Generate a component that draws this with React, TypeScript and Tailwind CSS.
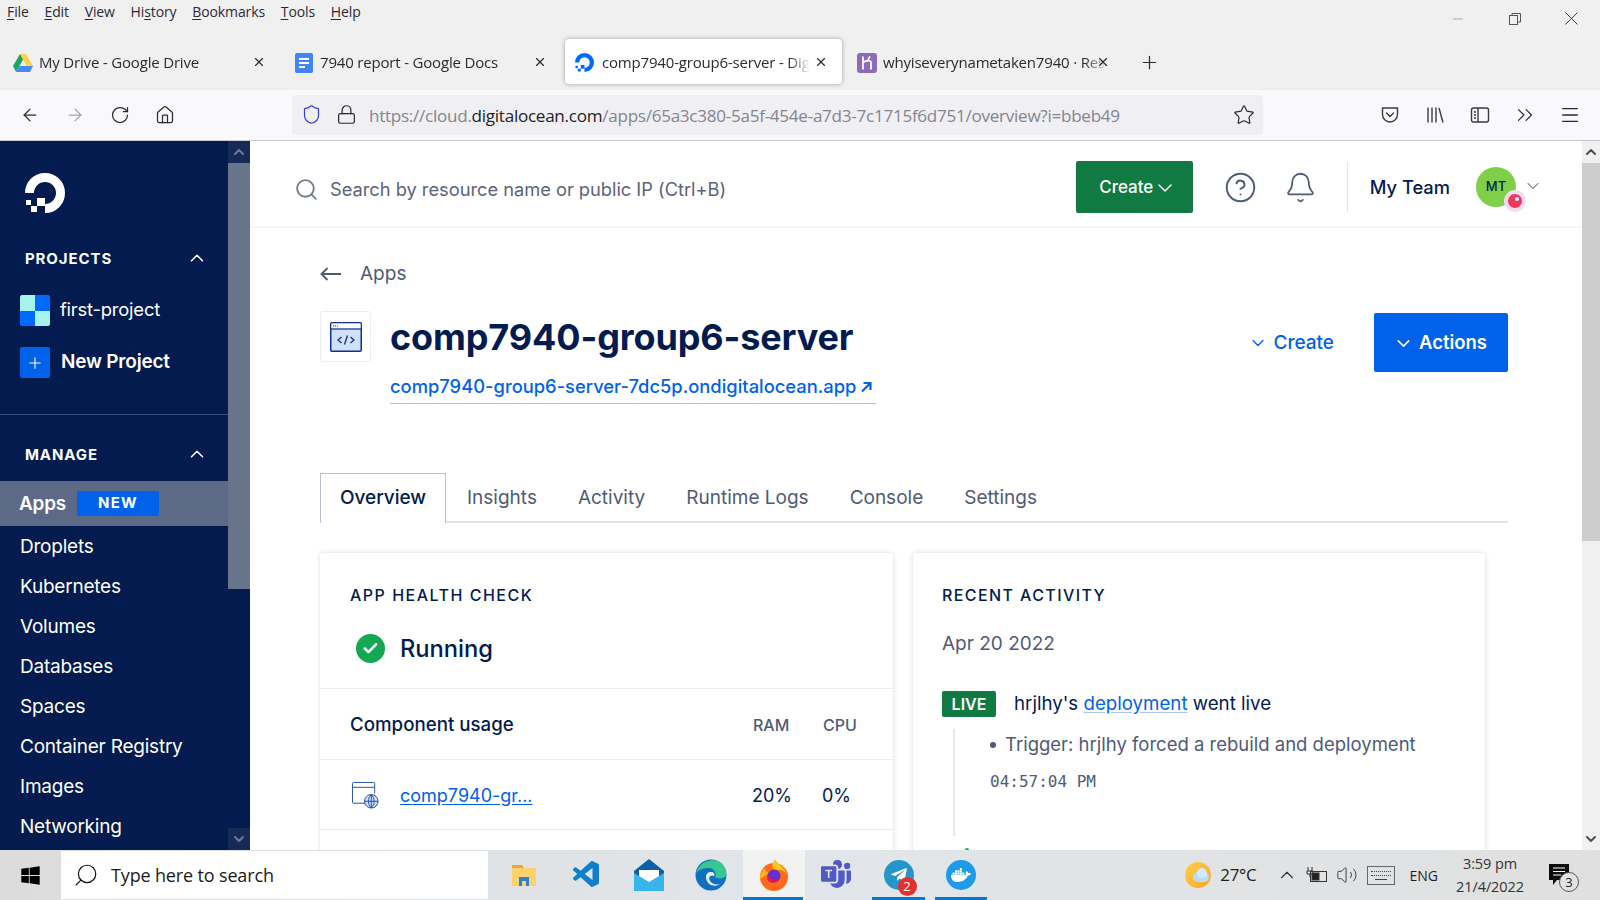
import type { ReactNode } from "react";
import {
  ArrowLeft,
  ArrowRight,
  Bell,
  Check,
  ChevronDown,
  ChevronUp,
  ChevronsRight,
  CircleHelp,
  Home,
  Lock,
  Menu,
  Minus,
  Plus,
  RotateCw,
  Search,
  Shield,
  Star,
  Volume2,
  X,
} from "lucide-react";
import { BsMicrosoftTeams } from "react-icons/bs";
import { FaDocker, FaTelegramPlane, FaWindows } from "react-icons/fa";
import { VscVscode } from "react-icons/vsc";

const browserFont = "font-['Open_Sans',sans-serif]";
const appFont = "font-['Inter',sans-serif]";

function DoLogo({ className, color }: { className: string; color: string }) {
  return (
    <svg viewBox="0 0 40 40" className={className}>
      <path d="M4.5 20A15.5 15.5 0 1 1 20 35.5" fill="none" stroke={color} strokeWidth="9" />
      <rect x="12" y="25" width="8" height="8" fill={color} />
      <rect x="6" y="33" width="6" height="6" fill={color} />
      <rect x="1" y="27" width="5" height="5" fill={color} />
    </svg>
  );
}

function DriveIcon() {
  return (
    <svg viewBox="0 0 20 18" className="h-[18px] w-5 shrink-0">
      <path d="M7 0h6l-3.2 6L6.5 12 3 18 0 12z" fill="#1fa463" />
      <path d="M7 0h6l7 12h-6.5z" fill="#ffd04b" />
      <path d="M6.5 12H20l-3 6H3z" fill="#4688f4" />
    </svg>
  );
}

function DocsIcon() {
  return (
    <svg viewBox="0 0 18 20" className="h-5 w-[18px] shrink-0">
      <rect width="18" height="20" rx="2" fill="#4285f4" />
      <path d="M4 6h10M4 10h10M4 14h6" stroke="#fff" strokeWidth="1.8" />
    </svg>
  );
}

function HerokuIcon() {
  return (
    <svg viewBox="0 0 20 20" className="h-5 w-5 shrink-0">
      <rect width="20" height="20" rx="3" fill="#8d6bb8" />
      <path d="M6 3.5v13M6 9.5c3-2 8-3 8 0v7M13 3.5l-2 3" fill="none" stroke="#fff" strokeWidth="1.8" />
    </svg>
  );
}

function BrowserTab({
  icon,
  title,
  active,
  className,
}: {
  icon: ReactNode;
  title: string;
  active?: boolean;
  className: string;
}) {
  return (
    <div
      className={`flex h-[45px] items-center rounded-[4px] ${className} ${
        active ? "bg-white pt-[2px] shadow-[0_0_4px_rgba(0,0,0,0.35)]" : "pt-[4px]"
      }`}
    >
      {icon}
      <div className="min-w-0 flex-1 overflow-hidden text-[15px] tracking-[-0.18px] whitespace-nowrap text-[#2b2a33] [mask-image:linear-gradient(to_right,black_90%,transparent_100%)]">
        {title}
      </div>
    </div>
  );
}

function MenuBar() {
  const items = [
    ["", "F", "ile"],
    ["", "E", "dit"],
    ["", "V", "iew"],
    ["Hi", "s", "tory"],
    ["", "B", "ookmarks"],
    ["", "T", "ools"],
    ["", "H", "elp"],
  ];
  return (
    <div className="flex h-[38px] shrink-0 items-start justify-between pr-[17px] pl-[7px]">
      <div className="flex gap-[15.7px] pt-[1px] text-[14px] tracking-[-0.1px] text-[#2b2a33]">
        {items.map(([before, key, after]) => (
          <span key={key}>
            {before}
            <span className="underline underline-offset-2">{key}</span>
            {after}
          </span>
        ))}
      </div>
      <div className="flex items-center pt-[7px] text-[#888]">
        <Minus className="h-4 w-4" strokeWidth={1} />
        <svg viewBox="0 0 12 12" className="ml-[43px] h-3 w-3" fill="none" stroke="#555" strokeWidth="1">
          <rect x="0.5" y="2.5" width="8" height="9" />
          <path d="M3 2.5V.5h8.5V9H8.5" />
        </svg>
        <X className="ml-[39px] h-[23px] w-[23px] text-[#222]" strokeWidth={0.9} />
      </div>
    </div>
  );
}

function TabStrip() {
  return (
    <div className="flex h-[52px] shrink-0 items-start">
      <div className="relative flex w-[281px] items-center pl-[13px]">
        <BrowserTab
          className="w-[258px] gap-[6px]"
          icon={<DriveIcon />}
          title="My Drive - Google Drive"
        />
        <X className="absolute left-[252px] mt-[2px] h-[14px] w-[14px] text-[#2b2a33]" />
      </div>
      <div className="relative flex w-[284px] items-center pl-[14px]">
        <BrowserTab
          className="w-[252px] gap-[7px]"
          icon={<DocsIcon />}
          title="7940 report - Google Docs"
        />
        <X className="absolute left-[252px] mt-[2px] h-[14px] w-[14px] text-[#2b2a33]" />
      </div>
      <div className="relative mt-[1px] flex w-[277px] items-center">
        <BrowserTab
          active
          className="w-[277px] gap-2 pr-[32px] pl-[10px]"
          icon={<DoLogo className="h-[19px] w-[19px] shrink-0" color="#0069ff" />}
          title="comp7940-group6-server - DigitalOcean"
        />
        <X className="absolute left-[249px] mt-[1px] h-[14px] w-[14px] text-[#2b2a33]" />
      </div>
      <div className="relative flex w-[300px] items-center pl-[15px]">
        <BrowserTab
          className="w-[250px] gap-[6px]"
          icon={<HerokuIcon />}
          title="whyiseverynametaken7940 · Resources"
        />
        <X className="absolute left-[254px] mt-[2px] h-[14px] w-[14px] text-[#2b2a33]" />
      </div>
      <Plus className="mt-[14px] -ml-[3px] h-[21px] w-[21px] text-[#2b2a33]" strokeWidth={1.4} />
    </div>
  );
}

function Toolbar() {
  return (
    <div className="flex h-[51px] shrink-0 items-center border-b border-[#c9c9cc] bg-[#f9f9fb] pb-[1px]">
      <div className="flex w-[292px] items-center gap-[25px] pl-[20px] text-[#2b2a33]">
        <ArrowLeft className="h-5 w-5" strokeWidth={1.5} />
        <ArrowRight className="h-5 w-5 text-[#a5a5aa]" strokeWidth={1.5} />
        <RotateCw className="h-5 w-5" strokeWidth={1.5} />
        <Home className="h-5 w-5" strokeWidth={1.5} />
      </div>
      <div className="flex h-10 w-[971px] items-center rounded-[4px] bg-[#f0f0f4] pr-[8px] pl-[9px]">
        <Shield className="h-[21px] w-[21px] shrink-0 text-[#3b3fd9]" strokeWidth={1.4} />
        <Lock className="ml-[14px] h-[21px] w-[21px] shrink-0 text-[#2b2a33]" strokeWidth={1.4} />
        <div className="ml-[12px] flex-1 truncate pt-[2px] text-[17.1px] tracking-[-0.28px] text-[#85858c]">
          https://cloud.<span className="text-[#1d1d22]">digitalocean.com</span>
          /apps/65a3c380-5a5f-454e-a7d3-7c1715f6d751/overview?i=bbeb49
        </div>
        <Star className="h-[22px] w-[22px] shrink-0 text-[#2b2a33]" strokeWidth={1.3} />
      </div>
      <div className="ml-[117px] flex items-center gap-[25px] text-[#2b2a33]">
        <svg viewBox="0 0 20 20" className="h-5 w-5" fill="none" stroke="#3a3a42" strokeWidth="1.4">
          <path d="M2.5 3h15v6.5a7.5 7.5 0 0 1-15 0z" strokeLinejoin="round" />
          <path d="M6.5 8l3.5 3.5L13.5 8" strokeLinecap="round" />
        </svg>
        <svg viewBox="0 0 20 20" className="h-5 w-5" fill="none" stroke="#3a3a42" strokeWidth="1.4">
          <path d="M3 2.5v15M7 2.5v15M11 2.5v15M14 3l4 14.5" />
        </svg>
        <svg viewBox="0 0 20 20" className="h-5 w-5" fill="none" stroke="#3a3a42" strokeWidth="1.4">
          <rect x="1.5" y="3" width="17" height="14" rx="2" />
          <path d="M8 3v14M4 7h2M4 10h2M4 13h2" />
        </svg>
        <ChevronsRight className="-mx-[3px] h-[26px] w-[26px]" strokeWidth={1.1} />
        <Menu className="-ml-[1px] h-[22px] w-[22px]" strokeWidth={1.5} />
      </div>
    </div>
  );
}

function Sidebar() {
  const links = ["Droplets", "Kubernetes", "Volumes", "Databases", "Spaces", "Container Registry", "Images", "Networking"];
  return (
    <div className="flex w-[250px] shrink-0 overflow-hidden">
      <nav className="h-full w-[228px] shrink-0 overflow-hidden bg-[#031b4e] text-white">
        <div className="pt-[32px] pl-[25px]">
          <DoLogo className="h-10 w-10" color="#fff" />
        </div>
        <div className="mt-[35px] flex h-[22px] items-center justify-between pr-[20px] pl-[25px] text-[15px] font-bold tracking-[0.9px]">
          PROJECTS
          <ChevronUp className="-mt-[2px] h-[22px] w-[22px]" strokeWidth={1.7} />
        </div>
        <div className="mt-[25px] flex h-[31px] items-center pl-5">
          <div className="grid h-[31px] w-[30px] grid-cols-2 grid-rows-2 overflow-hidden rounded-[2px]">
            <div className="bg-[#a5f3ec]" />
            <div className="bg-[#0069ff]" />
            <div className="bg-[#0069ff]" />
            <div className="bg-[#a5f3ec]" />
          </div>
          <span className="ml-[10px] pb-[2px] text-[18.4px] tracking-[-0.2px]">first-project</span>
        </div>
        <div className="mt-[21px] flex h-[31px] items-center pl-5">
          <div className="flex h-[31px] w-[30px] items-center justify-center rounded-[2px] bg-[#0061eb]">
            <Plus className="h-[18px] w-[18px]" strokeWidth={1.5} />
          </div>
          <span className="ml-[11px] text-[19px] font-semibold tracking-[-0.2px]">New Project</span>
        </div>
        <div className="mt-[36px] border-t border-[#3a4d78]" />
        <div className="mt-[29px] flex h-[22px] items-center justify-between pr-[20px] pl-[25px] text-[15px] font-bold tracking-[0.9px]">
          MANAGE
          <ChevronUp className="-mt-[2px] h-[22px] w-[22px]" strokeWidth={1.7} />
        </div>
        <div className="mt-[15px] flex h-[45px] items-center bg-[#5d6a87] pl-[19px]">
          <span className="pt-[1px] text-[18.9px] font-semibold tracking-[-0.2px]">Apps</span>
          <span className="ml-[11px] flex h-[25px] w-[82px] items-center justify-center rounded-[2px] bg-[#0061eb] text-[15px] font-bold tracking-[1.2px]">
            NEW
          </span>
        </div>
        <div className="flex flex-col gap-[10px] pt-[6px] pl-5">
          {links.map((link) => (
            <div key={link} className="h-[30px] text-[19px] leading-[30px] tracking-[-0.22px] whitespace-nowrap">
              {link}
            </div>
          ))}
        </div>
      </nav>
      <div className="flex h-full w-[22px] shrink-0 flex-col bg-[#031b4e]">
        <div className="flex h-[22px] items-center justify-center bg-[#152a55]">
          <ChevronUp className="h-4 w-4 text-[#6c7a96]" strokeWidth={3} />
        </div>
        <div className="h-[426px] bg-[#68738c]" />
        <div className="flex-1" />
        <div className="flex h-[22px] items-center justify-center bg-[#152a55]">
          <ChevronDown className="h-4 w-4 text-[#6c7a96]" strokeWidth={3} />
        </div>
      </div>
    </div>
  );
}

function TopBar() {
  return (
    <div className="flex h-[87px] shrink-0 items-center border-b-2 border-[#f6f6f8] pt-[12px] pr-[39px] pl-[44px]">
      <Search className="h-[25px] w-[25px] shrink-0 text-[#737c90]" strokeWidth={1.8} />
      <div className="ml-[11px] flex-1 pt-[1px] text-[18.3px] tracking-[-0.02px] text-[#5b6478]">
        Search by resource name or public IP (Ctrl+B)
      </div>
      <button className="-mt-[5px] flex h-[52px] w-[117px] items-center justify-center rounded-[2px] bg-[#117a42] pt-[1px] pl-[8px] text-[17px] font-medium text-white">
        Create
        <ChevronDown className="h-[24px] w-[24px]" strokeWidth={1.5} />
      </button>
      <CircleHelp className="-mt-[5px] ml-[31px] h-[33px] w-[33px] text-[#4f5b76]" strokeWidth={1.4} />
      <Bell className="-mt-[5px] ml-[27px] h-[33px] w-[33px] text-[#4f5b76]" strokeWidth={1.3} />
      <div className="-mt-[5px] ml-[30px] h-[50px] border-l border-[#e0e3ea]" />
      <span className="-mt-[3px] ml-[22px] text-[18.3px] font-medium text-[#031b4e]">My Team</span>
      <div className="relative -mt-[5px] ml-[26px] flex h-10 w-10 items-center justify-center rounded-full bg-[#7fcf49] text-[13px] font-medium text-[#031b4e]">
        MT
        <div className="absolute top-[23px] left-[28px] flex h-[22px] w-[22px] items-center justify-center rounded-full bg-[#f6dcf3]">
          <div className="relative h-[14px] w-[14px] rounded-full bg-[#f0385f]">
            <div className="absolute top-[3px] left-[7px] h-[4px] w-[4px] rounded-full bg-white" />
          </div>
        </div>
      </div>
      <ChevronDown className="-mt-[7px] ml-[7px] h-[20px] w-[20px] text-[#8a94ad]" strokeWidth={1.4} />
    </div>
  );
}

function AppIcon() {
  return (
    <div className="flex h-[51px] w-[51px] items-center justify-center rounded-[3px] border border-[#eceef2]">
      <svg viewBox="0 0 32 30" className="h-[30px] w-8">
        <rect x="0.75" y="0.75" width="30.5" height="28.5" rx="1" fill="#cfe1fb" stroke="#12308a" strokeWidth="1.5" />
        <rect x="1.5" y="1.5" width="29" height="5" fill="#fff" />
        <path d="M1 7h30" stroke="#12308a" strokeWidth="1.2" />
        <path d="M3 4h1M5 4h1M7 4h1" stroke="#12308a" strokeWidth="1" />
        <path d="M11.5 15l-3.5 3 3.5 3M20.5 15l3.5 3-3.5 3M17.5 13.5l-3 9" fill="none" stroke="#12308a" strokeWidth="1.3" />
      </svg>
    </div>
  );
}

function PageHead() {
  return (
    <>
      <div className="mt-[30px] flex h-[32px] items-center text-[#4f5b76]">
        <svg viewBox="0 0 21 14" className="h-[14px] w-[21px]" fill="none" stroke="#4f5b76" strokeWidth="1.9">
          <path d="M21 7H1.5M7.5 1L1.5 7l6 6" />
        </svg>
        <span className="ml-[19px] text-[19px]">Apps</span>
      </div>
      <div className="mt-[21px] flex items-start">
        <AppIcon />
        <div className="ml-[19px] flex-1">
          <div className="text-[36px] leading-[52px] font-bold tracking-[-0.12px] text-[#031b4e]">
            comp7940-group6-server
          </div>
          <div className="mt-[8px] inline-flex h-[33px] items-center border-b border-[#a9c4f5] pr-[4px] text-[18.35px] font-medium text-[#0061eb]">
            comp7940-group6-server-7dc5p.ondigitalocean.app
            <svg viewBox="0 0 12 12" className="ml-[4px] h-[12px] w-[12px]" fill="none" stroke="#0061eb" strokeWidth="2.2">
              <path d="M2 10.5L10 2.5M3.5 2H10.5V9" />
            </svg>
          </div>
        </div>
        <div className="flex items-center pt-[2px]">
          <span className="flex items-center gap-[6px] pt-[1px] text-[19px] font-medium text-[#0061eb]">
            <ChevronDown className="h-[20px] w-[20px]" strokeWidth={1.6} />
            Create
          </span>
          <button className="ml-[40px] flex h-[59px] w-[134px] items-center justify-center gap-[5px] rounded-[2px] bg-[#0061eb] pt-[1px] pr-[2px] text-[18.5px] font-semibold text-white">
            <ChevronDown className="h-[21px] w-[21px]" strokeWidth={1.8} />
            Actions
          </button>
        </div>
      </div>
    </>
  );
}

function Tabs() {
  const tabs = ["Insights", "Activity", "Runtime Logs", "Console", "Settings"];
  return (
    <div className="mt-[69px] flex h-[50px] items-end border-b-2 border-[#dfe3ea] text-[19px] text-[#4f5b76]">
      <div className="-mb-[2px] flex h-[50px] w-[126px] items-center justify-center border border-b-0 border-[#b9c1cf] bg-white font-medium text-[#031b4e]">
        Overview
      </div>
      <div className="flex h-[48px] items-center gap-[41px] pt-[2px] pl-[21px]">
        {tabs.map((tab) => (
          <span key={tab}>{tab}</span>
        ))}
      </div>
    </div>
  );
}

function HealthCard() {
  return (
    <div className="h-[320px] w-[573px] shrink-0 rounded-t-[3px] bg-white shadow-[0_0_5px_rgba(3,27,78,0.16)]">
      <div className="h-[136px] border-b border-[#e9ebf0] px-[30px] pt-[31px]">
        <div className="text-[16px] leading-[22px] font-medium tracking-[1.5px] text-[#031b4e]">APP HEALTH CHECK</div>
        <div className="mt-[25px] flex items-center pl-[6px]">
          <div className="flex h-[29px] w-[29px] items-center justify-center rounded-full bg-[#15a854]">
            <Check className="h-[17px] w-[17px] text-white" strokeWidth={3.5} />
          </div>
          <span className="ml-[15px] text-[23.7px] font-medium text-[#031b4e]">Running</span>
        </div>
      </div>
      <div className="flex h-[71px] items-center border-b border-[#e9ebf0] pt-[2px] pr-[34px] pl-[30px]">
        <span className="flex-1 text-[18.7px] font-medium text-[#031b4e]">Component usage</span>
        <span className="w-[70px] text-[16px] font-medium text-[#4f5b76]">RAM</span>
        <span className="w-[36px] text-[16px] font-medium text-[#4f5b76]">CPU</span>
      </div>
      <div className="flex h-[70px] items-center border-b border-[#e9ebf0] pt-[2px] pr-[35px] pl-[32px]">
        <svg viewBox="0 0 28 28" className="h-[27px] w-[27px] shrink-0" fill="none" stroke="#1f4fa8" strokeWidth="1">
          <path d="M14 22H1.5a1 1 0 0 1-1-1V1.5a1 1 0 0 1 1-1h21a1 1 0 0 1 1 1V12" fill="#fff" />
          <path d="M1 5.5h22" />
          <circle cx="20" cy="20" r="7" fill="#cfe1fb" />
          <path d="M13 20h14M20 13v14M20 13c-4 4-4 10 0 14M20 13c4 4 4 10 0 14" />
        </svg>
        <span className="ml-[21px] flex-1 text-[18px] text-[#0061eb] underline underline-offset-2">comp7940-gr...</span>
        <span className="w-[70px] text-[18px] text-[#031b4e]">20%</span>
        <span className="w-[36px] text-[18px] text-[#031b4e]">0%</span>
      </div>
    </div>
  );
}

function ActivityCard() {
  return (
    <div className="h-[320px] w-[572px] shrink-0 rounded-t-[3px] bg-white pt-[31px] pr-[30px] pl-[29px] shadow-[0_0_5px_rgba(3,27,78,0.16)]">
      <div className="text-[16px] leading-[22px] font-medium tracking-[1.4px] text-[#031b4e]">RECENT ACTIVITY</div>
      <div className="mt-[24px] text-[19px] leading-[28px] text-[#4f5b76]">Apr 20 2022</div>
      <div className="mt-[33px] flex h-[25px] items-center">
        <span className="flex h-[26px] w-[54px] items-center justify-center rounded-[2px] bg-[#117a42] text-[16px] font-semibold text-white">
          LIVE
        </span>
        <span className="ml-[18px] pt-[1px] text-[18.7px] text-[#031b4e]">
          hrjlhy's <span className="text-[#0061eb] underline decoration-[#a9c4f5] underline-offset-2">deployment</span> went live
        </span>
      </div>
      <div className="mt-[13px] ml-[11px] h-[107px] border-l-2 border-[#e5e8ee] pl-[35px]">
        <div className="flex h-[32px] items-center text-[18.5px] text-[#4f5b76]">
          <span className="mr-[9px] h-[6px] w-[6px] rounded-full bg-[#4f5b76]" />
          Trigger: hrjlhy forced a rebuild and deployment
        </div>
        <div className="mt-[9px] font-['DejaVu_Sans_Mono',monospace] text-[16px] text-[#4f5b76]">04:57:04 PM</div>
      </div>
      <div className="mt-[12px] ml-[23px] h-[4px] w-[4px] rounded-full bg-[#15a854]" />
    </div>
  );
}

function Content() {
  return (
    <div className={`flex min-w-0 flex-1 overflow-hidden ${appFont}`}>
      <div className="min-w-0 flex-1 overflow-hidden bg-white">
        <TopBar />
        <div className="pr-[74px] pl-[70px]">
          <PageHead />
          <Tabs />
          <div className="mt-[30px] flex w-[1188px] gap-[20px]">
            <HealthCard />
            <ActivityCard />
          </div>
        </div>
      </div>
      <div className="flex h-full w-[18px] shrink-0 flex-col bg-[#f0f0f0]">
        <div className="flex h-[22px] items-center justify-center">
          <ChevronUp className="h-4 w-4 text-[#505050]" strokeWidth={3} />
        </div>
        <div className="h-[378px] bg-[#cdcdcd]" />
        <div className="flex-1" />
        <div className="flex h-[22px] items-center justify-center">
          <ChevronDown className="h-4 w-4 text-[#505050]" strokeWidth={3} />
        </div>
      </div>
    </div>
  );
}

function TaskIcon({ children, underline, current }: { children: ReactNode; underline?: boolean; current?: boolean }) {
  return (
    <div className={`relative flex h-full w-[62.4px] shrink-0 items-center justify-center ${current ? "bg-[#f2f2f2]" : ""}`}>
      {children}
      {underline && (
        <div className={`absolute bottom-0 h-[3px] bg-[#0078d4] ${current ? "right-[2px] left-0" : "right-[5px] left-[5px]"}`} />
      )}
    </div>
  );
}

function Taskbar() {
  return (
    <div
      className={`flex h-[50px] shrink-0 items-center bg-gradient-to-r from-[#dcdcdc] via-[#e2e6ea] to-[#e0e0e0] ${browserFont}`}
    >
      <div className="flex w-[61px] justify-center">
        <FaWindows className="h-[21px] w-[21px] text-black" />
      </div>
      <div className="flex h-[48px] w-[427px] items-center bg-white pl-[12px]">
        <Search className="h-[26px] w-[26px] -scale-x-100 text-[#111]" strokeWidth={1.1} />
        <span className="ml-[12px] pt-[1px] text-[18px] tracking-[-0.15px] text-[#1a1a1a]">Type here to search</span>
      </div>
      <div className="ml-[5px] flex h-full items-center">
        <TaskIcon>
          <svg viewBox="0 0 26 26" className="h-[26px] w-[26px]">
            <path d="M1 3h10l2 3H1z" fill="#e8a93a" />
            <rect x="1" y="6" width="24" height="18" fill="#fcd36b" />
            <path d="M8 24v-9h10v9h-3v-5h-4v5z" fill="#2b7fd4" />
          </svg>
        </TaskIcon>
        <TaskIcon>
          <VscVscode className="h-8 w-8 text-[#0f7fcc]" />
        </TaskIcon>
        <TaskIcon>
          <svg viewBox="0 0 30 32" className="h-8 w-[30px]">
            <path d="M15 0L0 12v20h30V12z" fill="#0d5fa8" />
            <path d="M5 11h20v8l-10 6-10-6z" fill="#fff" />
            <path d="M0 14l15 9 15-9v18H0z" fill="#36b5ec" />
          </svg>
        </TaskIcon>
        <TaskIcon>
          <svg viewBox="0 0 32 32" className="h-8 w-8">
            <circle cx="16" cy="16" r="15.5" fill="#0f6fc1" />
            <path d="M1 15C3 4 14-1 23 2c6 3 9 9 8 15-2 3-8 3-11 1 2-4-1-9-6-9-6 0-12 2-13 6z" fill="#36c98f" />
            <path d="M11 18c0-3 2-5 5-5 3 0 4 2 3 4-4-1-6 1-4 5 2 3 6 4 10 3-5 4-14 1-14-7z" fill="#e4f1fb" />
          </svg>
        </TaskIcon>
        <TaskIcon underline current>
          <svg viewBox="0 0 30 32" className="h-8 w-[30px]">
            <circle cx="15" cy="18" r="14" fill="#ff6b1a" />
            <path d="M16 0c2 5 9 7 11 14-3-3-7-4-11-3-4-3-3-7 0-11z" fill="#ffc61a" />
            <path d="M1 17c1-4 3-6 5-8 0 3 2 4 4 5l-9 6z" fill="#ffb01a" />
            <circle cx="15" cy="17" r="6.5" fill="#6a2fc8" />
            <path d="M9 16c2 5 8 7 12 3-2 6-11 6-13 1z" fill="#e3174f" />
          </svg>
        </TaskIcon>
        <TaskIcon>
          <BsMicrosoftTeams className="h-[30px] w-[30px] text-[#5059c9]" />
        </TaskIcon>
        <TaskIcon underline>
          <div className="relative flex h-[30px] w-[30px] items-center justify-center rounded-full bg-[#2496c9]">
            <FaTelegramPlane className="h-[18px] w-[18px] text-white" />
            <span className="absolute top-[17px] left-[14px] flex h-[19px] w-[19px] items-center justify-center rounded-full bg-[#e5302f] text-[13px] leading-none text-white">
              2
            </span>
          </div>
        </TaskIcon>
        <TaskIcon underline>
          <div className="flex h-[30px] w-[30px] items-center justify-center rounded-full bg-[#1d9ae8]">
            <FaDocker className="h-5 w-5 text-white" />
          </div>
        </TaskIcon>
      </div>
      <div className="ml-auto flex items-center text-[#1f1f1f]">
        <div className="relative h-[26px] w-[26px] rounded-full bg-gradient-to-br from-[#ffd04a] to-[#f5a623]">
          <div className="absolute top-[10px] left-[8px] h-[10px] w-[16px] rounded-full bg-[#bcdcf4]" />
          <div className="absolute top-[6px] left-[12px] h-[10px] w-[10px] rounded-full bg-[#d3e8f8]" />
        </div>
        <span className="ml-[9px] text-[17px] tracking-[-0.3px]">27°C</span>
        <ChevronUp className="ml-[19px] h-[22px] w-[22px] text-[#333]" strokeWidth={1.2} />
        <svg viewBox="0 0 22 16" className="ml-[8px] h-4 w-[22px]" fill="none" stroke="#333">
          <rect x="4.5" y="4.5" width="16" height="10" />
          <rect x="6" y="6" width="7" height="7" fill="#222" />
          <path d="M2 0v4M6 0v4M1 4h6v3H1zM4 7v3" />
        </svg>
        <Volume2 className="ml-[8px] h-[22px] w-[22px] text-[#333]" strokeWidth={1} />
        <div className="ml-[9px] flex h-[19px] w-[28px] flex-col justify-center gap-[3px] border border-[#666] px-[3px]">
          <div className="border-t border-dotted border-[#444]" />
          <div className="border-t border-dotted border-[#444]" />
          <div className="mx-[4px] border-t border-[#444]" />
        </div>
        <span className="ml-[15px] text-[14px]">ENG</span>
        <div className="ml-[13px] flex w-[78px] flex-col items-center text-[14.5px] leading-[23px] tracking-[-0.1px] text-[#333]">
          <span>3:59 pm</span>
          <span>21/4/2022</span>
        </div>
        <div className="relative mr-[27px] ml-[20px] h-[24px] w-[24px]">
          <svg viewBox="0 0 20 22" className="h-[24px] w-[20px]">
            <path d="M0 0h20v16H8l-4 5v-5H0z" fill="#0d0d0d" />
            <path d="M4 4h12M4 7.5h12M4 11h8" stroke="#fff" />
          </svg>
          <span className="absolute top-[9px] left-[10px] flex h-[20px] w-[20px] items-center justify-center rounded-full border border-[#555] bg-[#e3e3e3] text-[13px] leading-none">
            3
          </span>
        </div>
      </div>
    </div>
  );
}

export default function App() {
  return (
    <div className="flex h-screen w-screen flex-col overflow-hidden bg-[#f0f0f0]">
      <div className={`flex shrink-0 flex-col ${browserFont}`}>
        <MenuBar />
        <TabStrip />
        <Toolbar />
      </div>
      <div className={`flex min-h-0 flex-1 overflow-hidden ${appFont}`}>
        <Sidebar />
        <Content />
      </div>
      <Taskbar />
    </div>
  );
}
